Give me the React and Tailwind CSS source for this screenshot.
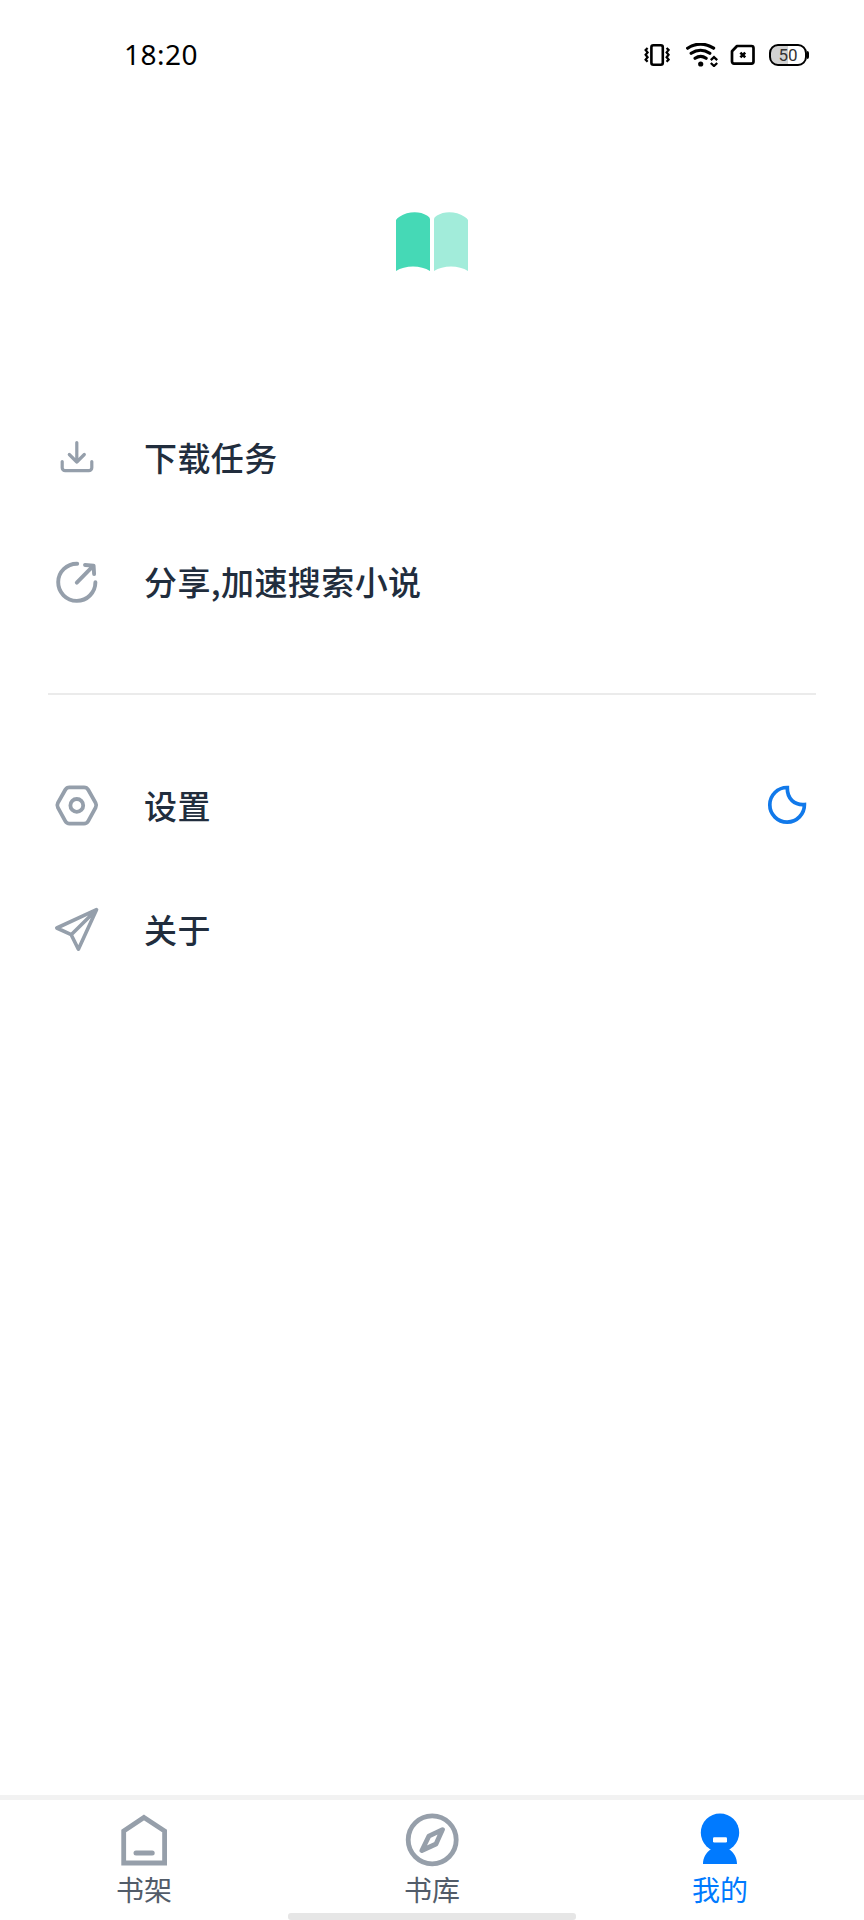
function StatusBar() {
  return (
    <header className="flex h-[110px] items-center justify-between pl-[124px] pr-[55px]">
      <span className="mb-[2px] font-['Noto_Sans',sans-serif] text-[28px] leading-none tracking-[0.5px] text-black">18:20</span>
      <div className="flex items-center text-black">
        {/* Vibrate */}
        <svg className="h-6 w-[26px]" viewBox="0 0 26 24" fill="none" stroke="currentColor">
          <rect x="7.4" y="2.2" width="11.4" height="19.6" rx="2" strokeWidth="2.6" />
          <path d="M3.600 5l-2 2 2 2.400-2 2.400 2 2.400-2 2.400 2 2.200M22.600 5l2 2-2 2.400 2 2.400-2 2.400 2 2.400-2 2.200" strokeWidth="2.200" />
        </svg>
        {/* Wifi */}
        <svg className="ml-4 h-6 w-8" viewBox="0 0 32 24" fill="none" stroke="currentColor">
          <path d="M1.600 5.200C9.500-.2 19.500-.2 27.600 5.200M5.200 10.300c5.800-4 12.900-4 18.600 0M9.100 15.300c3.500-2.500 7.600-2.500 11 0" strokeWidth="3.200" strokeLinecap="round" />
          <circle cx="14.700" cy="21" r="2.600" fill="currentColor" stroke="none" />
          <path d="M24.800 17.200l3.200-3 3.200 3M24.800 20l3.200 3 3.200-3" strokeWidth="2.300" />
        </svg>
        {/* Sim card */}
        <svg className="ml-3 h-6 w-[25px]" viewBox="0 0 25 24" fill="none" stroke="currentColor">
          <path d="M7 3h14.500a2 2 0 0 1 2 2v13.600a2 2 0 0 1-2 2H4a2 2 0 0 1-2-2V8.200z" strokeWidth="2.700" strokeLinejoin="round" />
          <path d="M10.400 9.600l4.800 4.800m0-4.800l-4.800 4.800" strokeWidth="2.600" />
        </svg>
        {/* Battery */}
        <div className="ml-[14px] flex items-center">
          <div className="flex h-[22px] w-[38px] items-center justify-center rounded-[9px] border-[2.5px] border-black bg-linear-to-r from-[#d2d2d2] from-50% to-white to-50% font-['Roboto',sans-serif] text-[17px] leading-none text-[#333]">
            50
          </div>
          <div className="h-2 w-[2px] rounded-r-sm bg-black" />
        </div>
      </div>
    </header>
  );
}

function BookLogo() {
  return (
    <svg className="h-[60px] w-[72px]" viewBox="0 0 72 60">
      <path d="M0 8Q1 6 3.500 4.800C12-1 24-1 31 3.600Q34 5.300 34 7V59C25 53 9 53 0 59z" fill="#45d9b6" />
      <path d="M38 7Q38 5.300 41 3.600C48-1 60-1 68.500 4.800Q71 6 72 8V59C63 53 47 53 38 59z" fill="#a2ecda" />
    </svg>
  );
}

function DownloadIcon() {
  return (
    <svg className="size-12" viewBox="0 0 48 48" fill="none" stroke="currentColor" strokeWidth="3.200" strokeLinecap="round" strokeLinejoin="round">
      <path d="M23.800 9.500V29M16.300 21.500l7.500 7.500 7.500-7.500M9.200 28.500v6.200a3 3 0 0 0 3 3h23.600a3 3 0 0 0 3-3v-6.200" />
    </svg>
  );
}

function ShareIcon() {
  return (
    <svg className="size-12" viewBox="0 0 48 48" fill="none" stroke="currentColor" strokeWidth="3.900" strokeLinecap="round" strokeLinejoin="round">
      <path d="M24.200 6.700A18.600 18.600 0 1 0 42.400 25.300" />
      <path d="M23.800 25.600L40 9.200M32 8l8.600.6.500 8.400" />
    </svg>
  );
}

function SettingsIcon() {
  return (
    <svg className="size-12" viewBox="0 0 48 48" fill="none" stroke="currentColor" strokeWidth="3.800" strokeLinejoin="round">
      <path d="M16.500 6.300h14.500q2.800 0 4.200 2.400l7.400 13.200q1.300 2.400 0 4.800l-7.400 13.400q-1.400 2.500-4.200 2.500H16.500q-2.800 0-4.200-2.500L4.900 26.700q-1.300-2.400 0-4.800l7.400-13.200q1.400-2.400 4.200-2.400z" />
      <circle cx="23.800" cy="24.400" r="6.400" />
    </svg>
  );
}

function SendIcon() {
  return (
    <svg className="size-12" viewBox="0 0 48 48" fill="none" stroke="currentColor" strokeWidth="3.600" strokeLinecap="round" strokeLinejoin="round">
      <path d="M43.500 4.700L3.800 23l14.400 6.700 7.200 14.500zM18.200 29.700L43.500 4.700" />
    </svg>
  );
}

function MoonIcon() {
  return (
    <svg className="size-12 text-[#1179ea]" viewBox="0 0 48 48" fill="none" stroke="currentColor" strokeWidth="3.700">
      <path d="M24.300 6.500A17.300 17.300 0 1 0 41.400 23.500C31.500 24.200 24.100 18 24.300 6.500z" />
    </svg>
  );
}

function HomeIcon() {
  return (
    <svg className="size-14 text-[#969faa]" viewBox="0 0 56 56" fill="none" stroke="currentColor" strokeWidth="4.800">
      <path d="M28 5.500L48.600 19v32H7.700V19z" />
      <path d="M20 41h16.200" strokeWidth="5" strokeLinecap="round" />
    </svg>
  );
}

function CompassIcon() {
  return (
    <svg className="size-14 text-[#969faa]" viewBox="0 0 56 56" fill="none" stroke="currentColor" strokeWidth="4.800" strokeLinejoin="round">
      <circle cx="28.200" cy="27.800" r="24" />
      <path d="M38.500 17.600L24.800 24.200 17.900 38.500 32 32z" />
    </svg>
  );
}

function UserIcon() {
  return (
    <svg className="size-14 text-[#007aff]" viewBox="0 0 56 56" fill="currentColor">
      <circle cx="28" cy="20.700" r="19.200" />
      <path d="M11 52C11 46 14 40.300 19 37.300 17 34 39 34 37 37.300 42 40.300 45 46 45 52z" />
      <rect x="21" y="25.300" width="14" height="5.200" rx="1.200" fill="white" />
    </svg>
  );
}

function MenuRow({ icon, label, extra }) {
  return (
    <div className="flex h-[124px] items-center">
      <span className="text-[#959fab]">{icon}</span>
      <span className="ml-[43px] flex-1 text-[33px] font-medium leading-none tracking-[0.4px] text-[#212d3d]">{label}</span>
      {extra}
    </div>
  );
}

const tabs = [
  { label: '书架', icon: <HomeIcon /> },
  { label: '书库', icon: <CompassIcon /> },
  { label: '我的', icon: <UserIcon />, active: true },
];

export default function App() {
  return (
    <div className="flex h-[1920px] w-[864px] flex-col overflow-hidden bg-white font-['Noto_Sans_CJK_SC',sans-serif]">
      <StatusBar />

      <main className="flex-1">
        <div className="flex h-[285px] justify-center pt-[102px]">
          <BookLogo />
        </div>

        <section className="pl-[53px] pr-[53px]">
          <MenuRow icon={<DownloadIcon />} label="下载任务" />
          <MenuRow icon={<ShareIcon />} label="分享,加速搜索小说" />
        </section>

        <div className="mx-12 mt-[50px] mb-[48px] h-[2px] bg-[#ebebeb]" />

        <section className="pl-[53px] pr-[53px]">
          <MenuRow icon={<SettingsIcon />} label="设置" extra={<MoonIcon />} />
          <MenuRow icon={<SendIcon />} label="关于" />
        </section>
      </main>

      {/* Bottom tabs */}
      <nav className="relative grid h-[125px] grid-cols-3 border-t-[5px] border-[#f2f2f2]">
        {tabs.map((tab) => (
          <div key={tab.label} className="flex flex-col items-center pt-3">
            {tab.icon}
            <span className={`mt-[5px] text-[28px] leading-8 ${tab.active ? 'text-[#007aff]' : 'text-[#525c69]'}`}>
              {tab.label}
            </span>
          </div>
        ))}
        <div className="absolute bottom-0 left-1/2 h-[7px] w-72 -translate-x-1/2 rounded-[3px] bg-[#e6e6e6]" />
      </nav>
    </div>
  );
}
